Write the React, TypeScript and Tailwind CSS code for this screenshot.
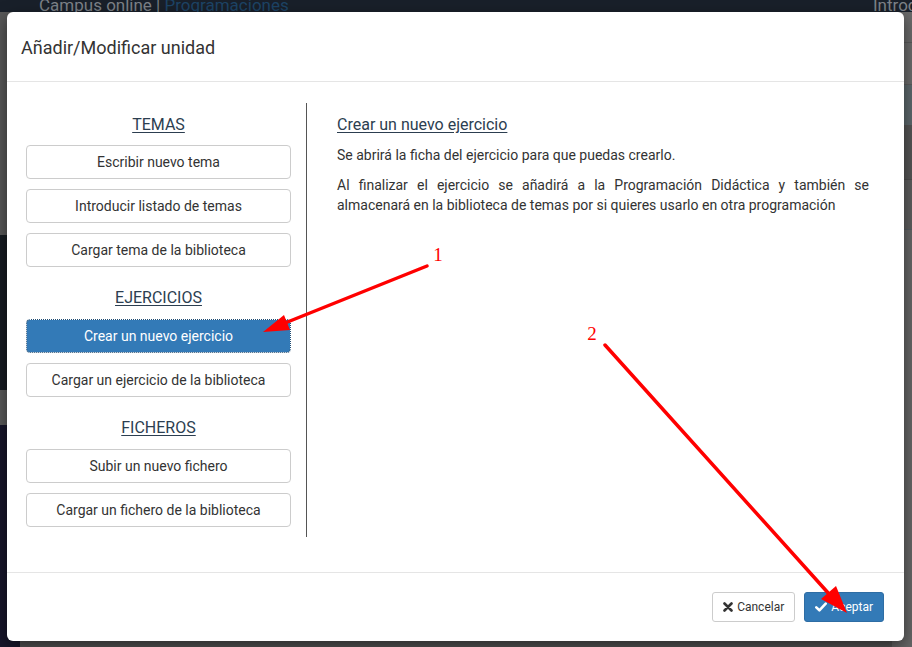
import React from "react";

const Btn = ({ children, active = false }: { children: React.ReactNode; active?: boolean }) => (
  <button
    className={
      active
        ? "w-full h-[34px] rounded-[4px] border border-[#204d74] bg-[#337ab7] text-white text-[14px] outline-1 outline-dotted outline-white outline-offset-[-1px]"
        : "w-full h-[34px] rounded-[4px] border border-[#cccccc] bg-white text-[#333333] text-[14px]"
    }
  >
    {children}
  </button>
);

const SectionTitle = ({ children, className = "" }: { children: React.ReactNode; className?: string }) => (
  <div className={"h-[20px] leading-[20px] text-center text-[16px] text-[#2c3e50] underline underline-offset-[2px] " + className}>
    {children}
  </div>
);

export default function App() {
  return (
    <div className="relative w-[912px] h-[647px] overflow-hidden bg-[#5a5a5a]" style={{ fontFamily: "Roboto, 'Noto Sans', sans-serif" }}>
      {/* background page (dimmed) */}
      <div className="flex flex-col h-full">
        <div className="h-[12px] bg-[#19202a] overflow-hidden flex justify-between">
          <div className="pl-[39px] -mt-[5px] text-[17px] leading-[20px] whitespace-nowrap">
            <span className="text-[#7d8288]">Campus online | </span>
            <span className="text-[#1d4466]">Programaciones</span>
          </div>
          <div className="-mt-[5px] text-[17px] leading-[20px] text-[#7d8288] w-[39px] overflow-hidden whitespace-nowrap">Introducción</div>
        </div>
        <div className="flex-1 flex">
          <div className="w-[20px] flex flex-col">
            <div className="h-[223px] bg-[#585858]" />
            <div className="h-[155px] bg-[#171c22]" />
            <div className="h-[35px] bg-[#5a5a5a]" />
            <div className="flex-1 bg-[#17162b]" />
          </div>
          <div className="flex-1 bg-[#555555]" />
          <div className="w-[20px] flex flex-col">
            <div className="h-[31px] bg-[#6a6a6a] border-b border-[#5a5a5a]" />
            <div className="h-[42px] bg-[#6b6b6b] border-b border-[#5c5c5c]" />
            <div className="h-[40px] bg-[#5d686c]" />
            <div className="h-[55px] bg-[#555555] border-b border-[#4d4d4d]" />
            <div className="h-[50px] bg-[#5e5e5e] border-b border-[#555d62]" />
            <div className="flex-1 bg-[#666666]" />
          </div>
        </div>
      </div>

      {/* modal */}
      <div className="absolute left-[7px] top-[12px] w-[897px] h-[629px] bg-white rounded-[6px] shadow-[0_5px_15px_rgba(0,0,0,0.5)] flex flex-col">
        <div className="h-[70px] flex items-center pt-[2px] px-[14px] border-b border-[#e5e5e5]">
          <h4 className="text-[18px] text-[#333333]">Añadir/Modificar unidad</h4>
        </div>
        <div className="flex-1 px-[19px] pt-[21px] pb-[35px] flex">
          <div className="w-[281px] pr-[15px] border-r border-[#555555] pt-[12px]">
            <SectionTitle className="mb-[10px]">TEMAS</SectionTitle>
            <div className="flex flex-col gap-[10px]">
              <Btn>Escribir nuevo tema</Btn>
              <Btn>Introducir listado de temas</Btn>
              <Btn>Cargar tema de la biblioteca</Btn>
            </div>
            <SectionTitle className="mt-[21px] mb-[11px]">EJERCICIOS</SectionTitle>
            <div className="flex flex-col gap-[10px]">
              <Btn active>Crear un nuevo ejercicio</Btn>
              <Btn>Cargar un ejercicio de la biblioteca</Btn>
            </div>
            <SectionTitle className="mt-[21px] mb-[11px]">FICHEROS</SectionTitle>
            <div className="flex flex-col gap-[10px]">
              <Btn>Subir un nuevo fichero</Btn>
              <Btn>Cargar un fichero de la biblioteca</Btn>
            </div>
          </div>
          <div className="flex-1 pl-[30px] pr-[16px] pt-[12px] text-[14px] leading-[20px] text-[#333333]">
            <div className="text-[16px] text-[#2c3e50] underline underline-offset-[2px] mb-[10px]">Crear un nuevo ejercicio</div>
            <p className="mb-[10px]">Se abrirá la ficha del ejercicio para que puedas crearlo.</p>
            <p className="text-justify">
              Al finalizar el ejercicio se añadirá a la Programación Didáctica y también se almacenará en la biblioteca de temas por si quieres usarlo en otra programación
            </p>
          </div>
        </div>
        <div className="h-[69px] border-t border-[#e5e5e5] flex items-center justify-end gap-[9px] pr-[20px]">
          <button className="h-[30px] px-[10px] rounded-[3px] border border-[#cccccc] bg-white text-[#333333] text-[12px] flex items-center gap-[4px]">
            <svg width="10" height="10" viewBox="0 0 10 10">
              <path d="M1.5 1.5 L8.5 8.5 M8.5 1.5 L1.5 8.5" stroke="#333" strokeWidth="2.6" strokeLinecap="round" />
            </svg>
            Cancelar
          </button>
          <button className="h-[30px] px-[10px] rounded-[3px] border border-[#2e6da4] bg-[#337ab7] text-white text-[12px] flex items-center gap-[4px]">
            <svg width="12" height="10" viewBox="0 0 12 10">
              <path d="M1.3 5.4 L4.4 8.3 L10.7 1.6" stroke="#fff" strokeWidth="2.6" fill="none" strokeLinecap="round" strokeLinejoin="round" />
            </svg>
            Aceptar
          </button>
        </div>
      </div>

      {/* annotation arrows */}
      <svg className="absolute inset-0 pointer-events-none" width="912" height="647" viewBox="0 0 912 647">
        <line x1="427" y1="266" x2="285" y2="323" stroke="#ff0000" strokeWidth="3.5" strokeLinecap="round" />
        <polygon points="263,332 290,330 284,315" fill="#ff0000" />
        <line x1="605" y1="345" x2="830" y2="595" stroke="#ff0000" strokeWidth="3.5" strokeLinecap="round" />
        <polygon points="847,613 836,586 821,599" fill="#ff0000" />
        <text x="438" y="261" fill="#ff0000" fontSize="19" textAnchor="middle" fontFamily="'Liberation Serif', serif">1</text>
        <text x="592" y="340" fill="#ff0000" fontSize="19" textAnchor="middle" fontFamily="'Liberation Serif', serif">2</text>
      </svg>
    </div>
  );
}
